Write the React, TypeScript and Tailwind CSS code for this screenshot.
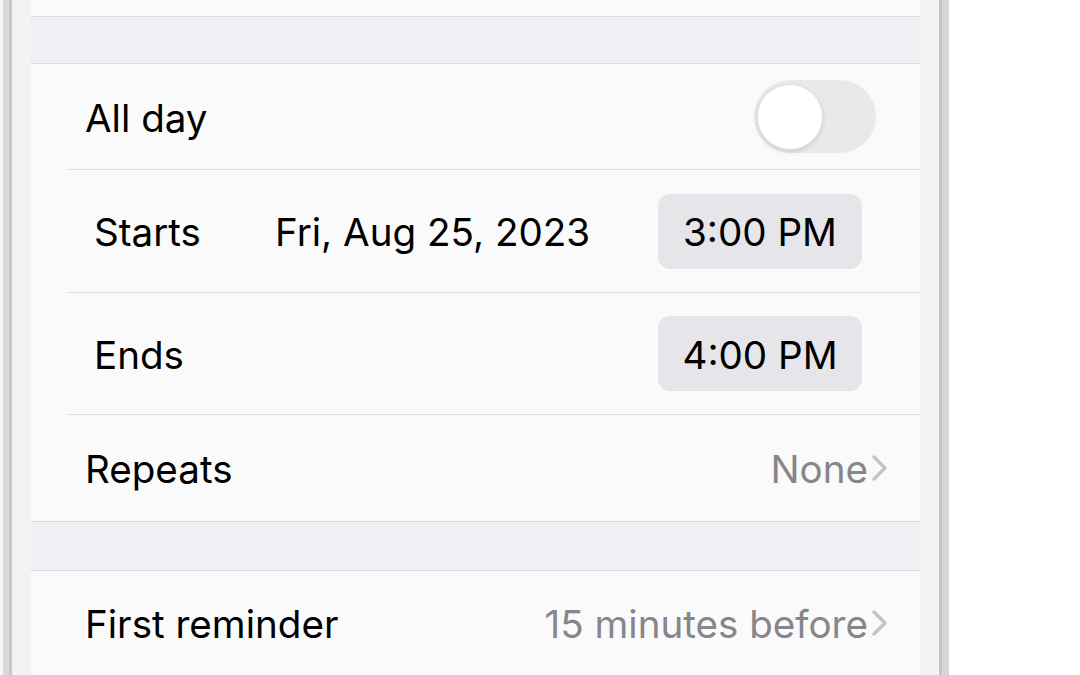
import React from "react";

// Thin chevron used on disclosure rows
function Chevron() {
  return (
    <svg width="18" height="28" viewBox="0 0 18 28" className="ml-[2px] shrink-0">
      <polyline
        points="4,3 15,14 4,25"
        fill="none"
        stroke="#c4c4c7"
        strokeWidth="3.4"
        strokeLinecap="round"
        strokeLinejoin="round"
      />
    </svg>
  );
}

function Separator() {
  return <div className="ml-[36px] h-px bg-[#dcdce0]" />;
}

function Toggle() {
  return (
    <div className="flex h-[73px] w-[122px] items-center rounded-full bg-[#e9e9eb] px-[3px]">
      <div className="h-[66px] w-[66px] rounded-full border border-[#e2e2e4] bg-white shadow-[0_2px_5px_rgba(0,0,0,0.12)]" />
    </div>
  );
}

function TimePill({ time }: { time: string }) {
  return (
    <div className="flex h-[75px] w-[204px] items-center justify-center rounded-[12px] bg-[#e5e5ea] text-black">
      <span className="pt-[4px]">{time}</span>
    </div>
  );
}

export default function App() {
  return (
    <div className="flex h-[675px] w-[1080px] overflow-hidden bg-white font-['Inter','Liberation_Sans',sans-serif] text-[38.6px] text-black">
      {/* left device edge */}
      <div className="w-[3px] bg-[#f7f7f7]" />
      <div className="w-[9px] border-r-[3px] border-[#c8c8c8] bg-[#dadada]" />
      <div className="w-[19px] bg-[#f3f3f3]" />

      {/* screen */}
      <div className="flex w-[889px] flex-col bg-[#fafafa]">
        <div className="h-[17px] border-b border-[#dcdce0] bg-[#fafafa]" />
        <div className="h-[48px] border-b border-[#dcdce0] bg-[#eff0f4]" />

        <div className="bg-[#fafafa]">
          <div className="flex h-[105px] items-center justify-between pl-[54px] pr-[44px]">
            <span className="pt-[4px]">All day</span>
            <Toggle />
          </div>
          <Separator />

          <div className="flex h-[122px] items-center pl-[63px] pr-[58px]">
            <span className="w-[181px] pt-[4px]">Starts</span>
            <span className="flex-1 pt-[4px]">Fri, Aug 25, 2023</span>
            <TimePill time="3:00 PM" />
          </div>
          <Separator />

          <div className="flex h-[121px] items-center pl-[63px] pr-[58px]">
            <span className="flex-1 pt-[4px]">Ends</span>
            <TimePill time="4:00 PM" />
          </div>
          <Separator />

          <div className="flex h-[107px] items-center border-b border-[#dcdce0] pl-[54px] pr-[32px]">
            <span className="flex-1 pt-[4px]">Repeats</span>
            <span className="pt-[4px] text-[#86868b]">None</span>
            <Chevron />
          </div>
        </div>

        <div className="h-[49px] border-b border-[#dcdce0] bg-[#eff0f4]" />

        <div className="flex h-[104px] shrink-0 items-center bg-[#fafafa] pl-[54px] pr-[32px]">
          <span className="flex-1 pt-[4px]">First reminder</span>
          <span className="pt-[4px] text-[#86868b]">15 minutes before</span>
          <Chevron />
        </div>
      </div>

      {/* right device edge */}
      <div className="w-[19px] bg-[#f3f3f3]" />
      <div className="w-[10px] border-l-[3px] border-[#c6c6c6] bg-[#d6d6d6]" />
      <div className="flex-1 bg-white" />
    </div>
  );
}
